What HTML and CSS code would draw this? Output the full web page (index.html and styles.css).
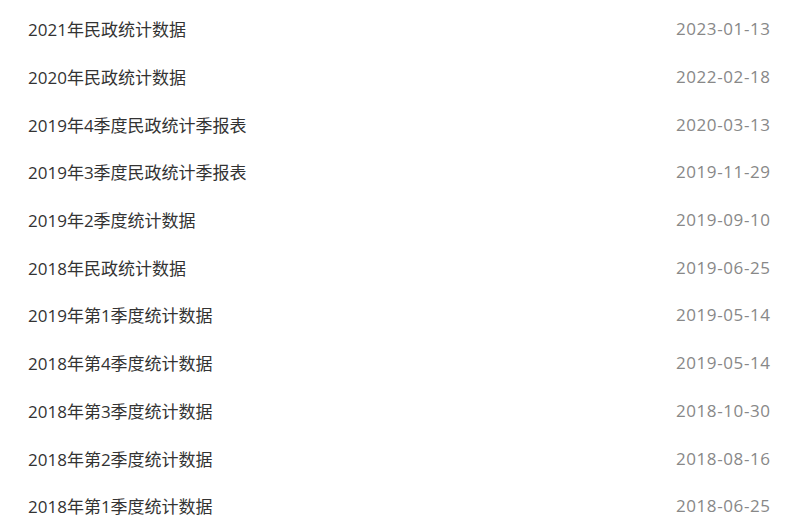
FILE: index.html
```html
<!DOCTYPE html>
<html lang="zh-CN">
<head>
<meta charset="utf-8">
<link rel="stylesheet" href="styles.css">
</head>
<body>
<ul class="list">
  <li class="row"><a class="title">2021年民政统计数据</a><span class="date">2023-01-13</span></li>
  <li class="row"><a class="title">2020年民政统计数据</a><span class="date">2022-02-18</span></li>
  <li class="row"><a class="title">2019年4季度民政统计季报表</a><span class="date">2020-03-13</span></li>
  <li class="row"><a class="title">2019年3季度民政统计季报表</a><span class="date">2019-11-29</span></li>
  <li class="row"><a class="title">2019年2季度统计数据</a><span class="date">2019-09-10</span></li>
  <li class="row"><a class="title">2018年民政统计数据</a><span class="date">2019-06-25</span></li>
  <li class="row"><a class="title">2019年第1季度统计数据</a><span class="date">2019-05-14</span></li>
  <li class="row"><a class="title">2018年第4季度统计数据</a><span class="date">2019-05-14</span></li>
  <li class="row"><a class="title">2018年第3季度统计数据</a><span class="date">2018-10-30</span></li>
  <li class="row"><a class="title">2018年第2季度统计数据</a><span class="date">2018-08-16</span></li>
  <li class="row"><a class="title">2018年第1季度统计数据</a><span class="date">2018-06-25</span></li>
</ul>
</body>
</html>
```
FILE: styles.css
```css
html, body {
  margin: 0;
  padding: 0;
  background: #ffffff;
}
body {
  font-family: "Open Sans", "Noto Sans CJK SC", sans-serif;
  font-size: 17px;
}
.list {
  list-style: none;
  margin: 0;
  padding: 5px 30px 0 28px;
}
.row {
  display: flex;
  justify-content: space-between;
  align-items: center;
  height: 47.7px;
}
.title {
  color: #333333;
}
.date {
  color: #888888;
  letter-spacing: 0.6px;
  margin-right: -0.6px;
}
```
